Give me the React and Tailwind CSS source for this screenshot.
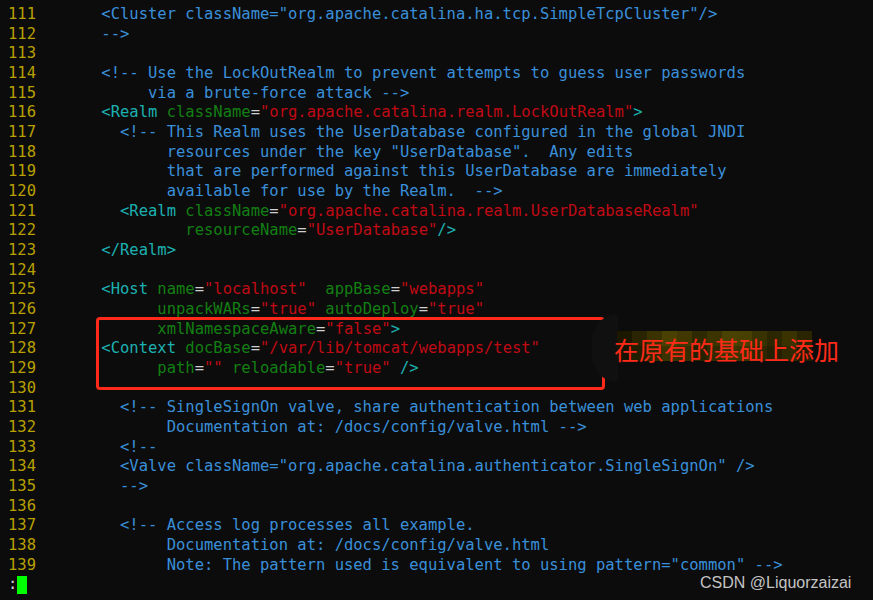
import React from "react";

const C = {
  b: "text-[#3a8fd9]",
  t: "text-[#1cb0b0]",
  r: "text-[#c00a14]",
  g: "text-[#137f13]",
  w: "text-[#d0d0d0]",
};

const lines = [
  [111, [["b", '      <Cluster className="org.apache.catalina.ha.tcp.SimpleTcpCluster"/>']]],
  [112, [["b", "      -->"]]],
  [113, []],
  [114, [["b", "      <!-- Use the LockOutRealm to prevent attempts to guess user passwords"]]],
  [115, [["b", "           via a brute-force attack -->"]]],
  [116, [["t", "      <Realm "], ["g", "className"], ["w", "="], ["r", '"org.apache.catalina.realm.LockOutRealm"'], ["t", ">"]]],
  [117, [["b", "        <!-- This Realm uses the UserDatabase configured in the global JNDI"]]],
  [118, [["b", '             resources under the key "UserDatabase".  Any edits']]],
  [119, [["b", "             that are performed against this UserDatabase are immediately"]]],
  [120, [["b", "             available for use by the Realm.  -->"]]],
  [121, [["t", "        <Realm "], ["g", "className"], ["w", "="], ["r", '"org.apache.catalina.realm.UserDatabaseRealm"']]],
  [122, [["g", "               resourceName"], ["w", "="], ["r", '"UserDatabase"'], ["t", "/>"]]],
  [123, [["t", "      </Realm>"]]],
  [124, []],
  [125, [["t", "      <Host "], ["g", "name"], ["w", "="], ["r", '"localhost"'], ["g", "  appBase"], ["w", "="], ["r", '"webapps"']]],
  [126, [["g", "            unpackWARs"], ["w", "="], ["r", '"true"'], ["g", " autoDeploy"], ["w", "="], ["r", '"true"']]],
  [127, [["g", "            xmlNamespaceAware"], ["w", "="], ["r", '"false"'], ["t", ">"]]],
  [128, [["t", "      <Context "], ["g", "docBase"], ["w", "="], ["r", '"/var/lib/tomcat/webapps/test"']]],
  [129, [["g", "            path"], ["w", "="], ["r", '""'], ["g", " reloadable"], ["w", "="], ["r", '"true"'], ["t", " />"]]],
  [130, []],
  [131, [["b", "        <!-- SingleSignOn valve, share authentication between web applications"]]],
  [132, [["b", "             Documentation at: /docs/config/valve.html -->"]]],
  [133, [["b", "        <!--"]]],
  [134, [["b", '        <Valve className="org.apache.catalina.authenticator.SingleSignOn" />']]],
  [135, [["b", "        -->"]]],
  [136, []],
  [137, [["b", "        <!-- Access log processes all example."]]],
  [138, [["b", "             Documentation at: /docs/config/valve.html"]]],
  [139, [["b", '             Note: The pattern used is equivalent to using pattern="common" -->']]],
];

const mosaicTop = [
  "bg-[#1c1800]", "bg-[#2a2500]", "bg-[#3a3300]", "bg-[#4a4100]", "bg-[#403800]",
  "bg-[#2e2900]", "bg-[#3c3400]", "bg-[#4a4200]", "bg-[#484000]", "bg-[#383200]",
  "bg-[#2c2700]", "bg-[#3a3300]", "bg-[#2a2500]",
];
const mosaicBottom = [
  "bg-[#161300]", "bg-[#221e00]", "bg-[#302a00]", "bg-[#3a3300]", "bg-[#342e00]",
  "bg-[#262200]", "bg-[#302a00]", "bg-[#3c3500]", "bg-[#3a3300]", "bg-[#2e2800]",
  "bg-[#242000]", "bg-[#2e2900]", "bg-[#201c00]",
];

export default function App() {
  return (
    <div className="relative w-[873px] h-[600px] overflow-hidden bg-[#0c0c0c] pl-[8px] pt-[5px] font-['DejaVu_Sans_Mono',monospace] text-[15.5px] leading-[19.68px]">
      {lines.map(([n, segs]) => (
        <div key={n} className="whitespace-pre h-[19.68px]">
          <span className="text-[#b8a000]">{n} </span>
          {segs.map(([c, txt], i) => (
            <span key={i} className={C[c]}>{txt}</span>
          ))}
        </div>
      ))}
      <div className="whitespace-pre h-[19.68px] flex items-center text-[#d0d0d0]">
        <span>:</span>
        <span className="inline-block w-[9.5px] h-[18px] bg-[#00ff00]"></span>
      </div>

      {/* annotation box */}
      <div className="absolute left-[96px] top-[317px] w-[509px] h-[73px] border-[3px] border-[#ff2a1a] rounded-[4px]"></div>

      {/* blurred mosaic behind note */}
      <div className="absolute left-[592px] top-[314px] w-[26px] h-[68px] rounded-l-full bg-[#101010]"></div>
      <div className="absolute left-[617px] top-[331px] flex flex-col">
        <div className="flex">
          {mosaicTop.map((c, i) => (
            <div key={i} className={`w-[15px] h-[15px] ${c}`}></div>
          ))}
        </div>
        <div className="flex">
          {mosaicBottom.map((c, i) => (
            <div key={i} className={`w-[15px] h-[15px] ${c}`}></div>
          ))}
        </div>
      </div>
      <div className="absolute left-[614px] top-[333px] text-[25px] leading-[32px] text-[#ff2a1a] font-['Noto_Sans_CJK_SC',sans-serif]">
        在原有的基础上添加
      </div>

      {/* watermark */}
      <div className="absolute left-[700px] top-[573px] text-[16px] leading-[20px] text-[#c4c4c4] font-['Liberation_Sans',Arial,sans-serif]">
        CSDN @Liquorzaizai
      </div>
    </div>
  );
}
